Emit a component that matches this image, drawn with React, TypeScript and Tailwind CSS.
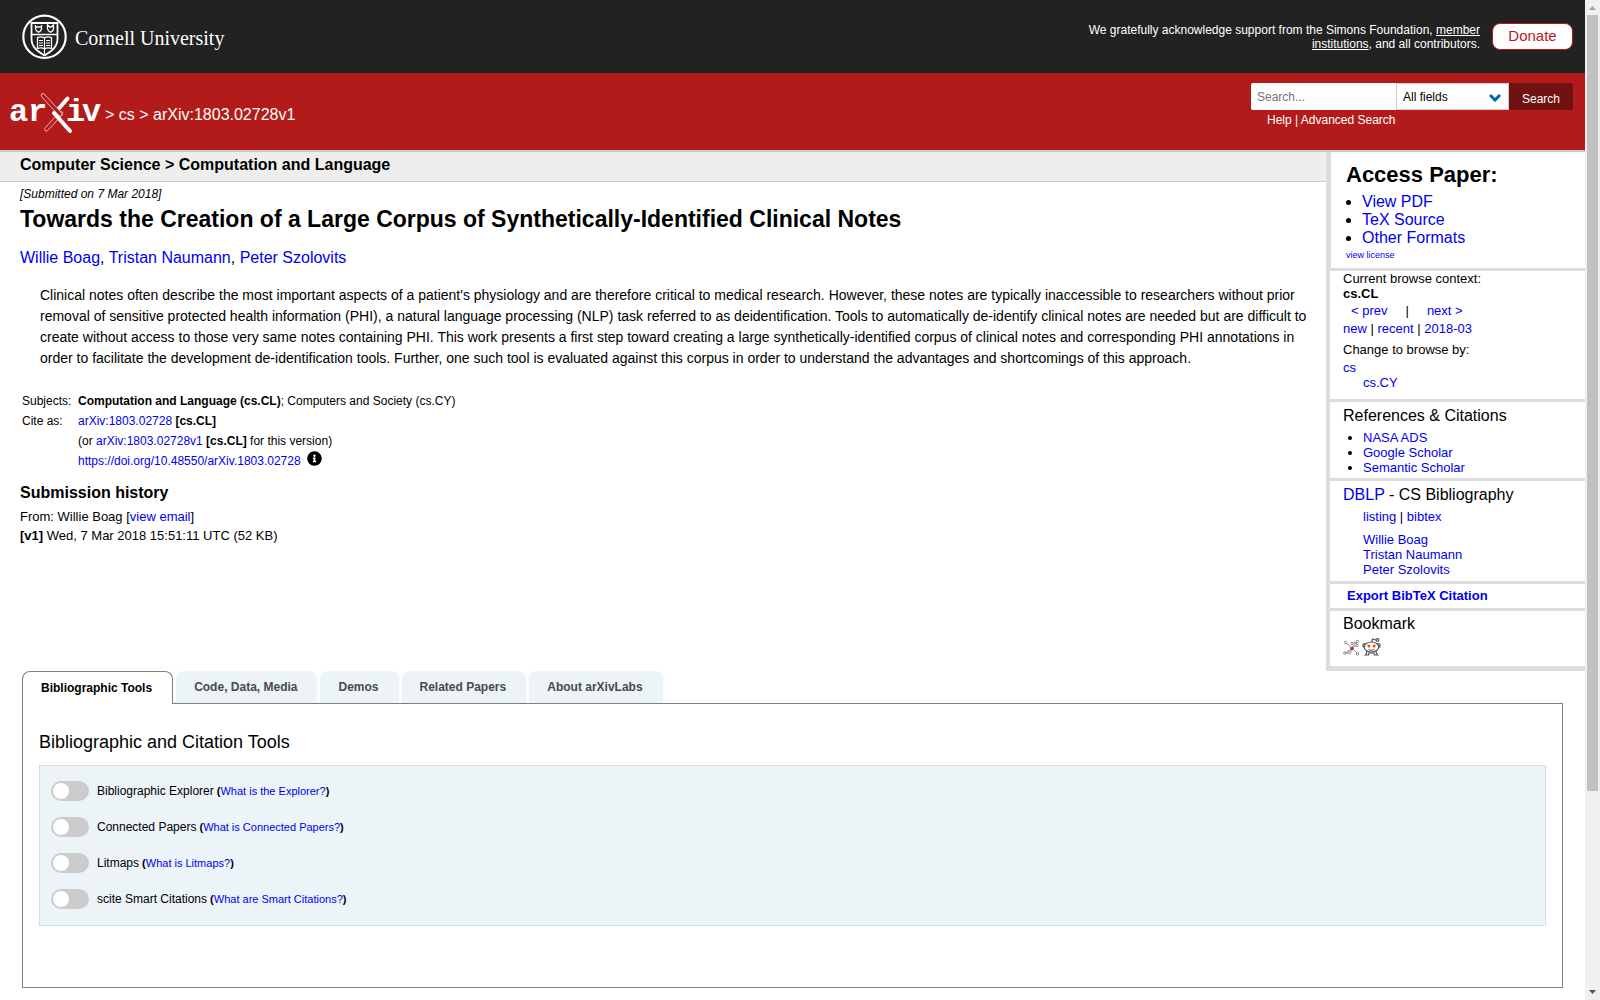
import type { ReactNode } from 'react'
import { FaInfoCircle } from 'react-icons/fa'

const tabs = ['Bibliographic Tools', 'Code, Data, Media', 'Demos', 'Related Papers', 'About arXivLabs']

const tools = [
  { id: 'bibex', name: 'Bibliographic Explorer', help: 'What is the Explorer?' },
  { id: 'connected', name: 'Connected Papers', help: 'What is Connected Papers?' },
  { id: 'litmaps', name: 'Litmaps', help: 'What is Litmaps?' },
  { id: 'scite', name: 'scite Smart Citations', help: 'What are Smart Citations?' },
]

const authors = ['Willie Boag', 'Tristan Naumann', 'Peter Szolovits']

function Link({ children, className = '' }: { children: ReactNode; className?: string }) {
  return (
    <a href="#" className={`text-[#0000ee] ${className}`}>
      {children}
    </a>
  )
}

function CornellSeal() {
  return (
    <svg viewBox="0 0 45 46" className="h-[46px] w-[45px]" fill="none" stroke="#fff" aria-hidden="true">
      <circle cx="22.5" cy="22.8" r="21.2" strokeWidth="2.2" />
      <path d="M9.5 9h26v16c0 8-6 12-13 16.5C15.5 37 9.5 33 9.5 25z" strokeWidth="1.8" />
      <path d="M9.5 20.5h26" strokeWidth="1.5" />
      <path d="M13.5 11v3.5c0 2.200 1.500 3 3 3.800 1.500-.8 3-1.600 3-3.800V11M13 13h7" strokeWidth="1.300" />
      <path d="M25.500 11v3.500c0 2.200 1.500 3 3 3.800 1.500-.8 3-1.600 3-3.800V11l-3 2.500z" strokeWidth="1.300" />
      <path d="M15.500 23.500c3-1 5-1 7 .5 2-1.500 4-1.500 7-.5v11c-3-1-5-1-7 .5-2-1.500-4-1.500-7-.5z" strokeWidth="1.300" />
      <path d="M22.500 24v16M17 26.500h4M17 29h4M17 31.500h4M24 26.500h4M24 29h4M24 31.500h4" strokeWidth="1.100" />
    </svg>
  )
}

function ArxivLogo() {
  return (
    <svg viewBox="0 0 92 44" className="h-[44px] w-[92px]" role="img" aria-label="arXiv">
      <g fill="#fff" fontFamily="'Liberation Mono', monospace" fontWeight="700" fontSize="32">
        <text x="-1" y="30">a</text>
        <text x="18" y="30">r</text>
        <text x="56" y="30">i</text>
        <text x="72" y="30">v</text>
      </g>
      <g fill="none" strokeLinecap="round">
        <path d="M36.500 38L51 22.500" stroke="#e9b3b3" strokeWidth="4.500" />
        <path d="M36.500 38L51 22.500" stroke="#b31b1b" strokeWidth="3" />
        <path d="M48 18.500L57.500 7.500" stroke="#fff" strokeWidth="4" />
        <path d="M33 4.500L50 23" stroke="#e9b3b3" strokeWidth="4.500" />
        <path d="M33 4.500L50 23" stroke="#b31b1b" strokeWidth="3" />
        <path d="M44 22L60 40" stroke="#fff" strokeWidth="4" />
      </g>
    </svg>
  )
}

function BibsonomyIcon() {
  return (
    <svg viewBox="0 0 17 17" className="h-[17px] w-[17px]" fill="none" stroke="#888" strokeWidth="1" aria-hidden="true">
      <path d="M3 4l6 5 5 5M9 9l4-6M9 9l-6 5M8 5l5-2 1 3-5 3M2 14h5l2-4" />
      <circle cx="2.500" cy="3.500" r="1.200" fill="#fff" />
      <circle cx="9" cy="4.500" r="1.200" fill="#fff" />
      <circle cx="14.500" cy="2.500" r="1.200" fill="#fff" />
      <circle cx="14" cy="6.500" r="1.200" fill="#fff" />
      <circle cx="1.800" cy="14" r="1.200" fill="#fff" />
      <circle cx="6.500" cy="13.500" r="1.200" fill="#fff" />
      <circle cx="14.500" cy="15" r="1.200" fill="#fff" />
      <circle cx="9" cy="9.500" r="1.700" fill="#a0304f" stroke="none" />
    </svg>
  )
}

function RedditIcon() {
  return (
    <svg viewBox="0 0 19 18" className="h-[18px] w-[19px]" fill="#fff" stroke="#555" strokeWidth="1.200" aria-hidden="true">
      <path d="M9.500 5l1-4 3.500 1" fill="none" />
      <circle cx="15.500" cy="2" r="1.400" />
      <path d="M5 12.500c0 2-.5 3.500-1.500 4.500h3l.5-2h5l.5 2h3c-1-1-1.500-2.500-1.500-4.500" />
      <circle cx="2.800" cy="7.500" r="1.900" />
      <circle cx="16.200" cy="7.500" r="1.900" />
      <ellipse cx="9.500" cy="9" rx="7.300" ry="5" />
      <circle cx="6.800" cy="8" r="1.500" fill="#ff4500" stroke="none" />
      <circle cx="12.200" cy="8" r="1.500" fill="#ff4500" stroke="none" />
      <path d="M6.500 11.300c2 1.300 4 1.300 6 0" fill="none" strokeWidth="1" />
    </svg>
  )
}

function Header() {
  return (
    <header>
      <div className="flex h-[73px] items-center justify-between bg-[#222] pr-3 pl-[22px] text-white">
        <a href="#" className="flex items-center gap-2 font-['Liberation_Serif',serif] text-[20px]">
          <CornellSeal />
          <span className="pt-[3px]">Cornell University</span>
        </a>
        <div className="flex items-center gap-3">
          <p className="w-[400px] text-right text-[12px] leading-[14px]">
            We gratefully acknowledge support from the Simons Foundation,{' '}
            <a href="#" className="underline">member institutions</a>, and all contributors.
          </p>
          <a href="#" className="flex h-[27px] w-[81px] items-center justify-center rounded-lg border border-[#b31b1b] bg-white text-[15px] text-[#b31b1b]">
            Donate
          </a>
        </div>
      </div>
      <div className="flex h-[79px] items-start justify-between border-b-2 border-[#ccc] bg-[#b31b1b] pr-3 pl-[10px] text-white">
        <div className="flex items-center gap-[3px] pt-[18px] text-[16px]">
          <a href="#"><ArxivLogo /></a>
          <div className="pt-1">
            &gt; <a href="#">cs</a> &gt; arXiv:1803.02728v1
          </div>
        </div>
        <form className="pt-[10px]" onSubmit={(e) => e.preventDefault()}>
          <div className="flex h-[27px] text-[12px]">
            <input
              type="text"
              placeholder="Search..."
              aria-label="Search term or terms"
              className="w-[145px] rounded-l-xs bg-white px-[6px] text-black placeholder:text-[#757575]"
            />
            <div className="relative">
              <select aria-label="Field to search" className="h-full w-[113px] appearance-none border border-[#ccc] bg-white px-[6px] text-black">
                <option>All fields</option>
              </select>
              <svg viewBox="0 0 12 8" className="pointer-events-none absolute top-[11px] right-2 h-2 w-3" fill="none" stroke="#0068ac" strokeWidth="3" aria-hidden="true">
                <path d="M1 1l5 5 5-5" />
              </svg>
            </div>
            <button type="submit" className="w-16 rounded-r-xs bg-[#701112] pt-1 text-white">Search</button>
          </div>
          <p className="pt-[3px] pl-4 text-[12px] leading-[14px]">
            <a href="#">Help</a> | <a href="#">Advanced Search</a>
          </p>
        </form>
      </div>
    </header>
  )
}

function Abstract() {
  return (
    <main className="min-w-0 flex-1">
      <h1 className="h-[30px] border-b border-[#ccc] bg-[#eee] pt-1 pl-5 text-[16px] leading-[18px] font-bold">
        Computer Science &gt; Computation and Language
      </h1>
      <div className="pt-[6px] pl-5">
        <p className="text-[12px] leading-[13px] italic">[Submitted on 7 Mar 2018]</p>
        <h2 className="pt-1 text-[23px] leading-[28px] font-bold">
          Towards the Creation of a Large Corpus of Synthetically-Identified Clinical Notes
        </h2>
        <p className="pt-[15px] text-[16px] leading-[20px]">
          {authors.map((author, i) => (
            <span key={author}>
              {i > 0 && ', '}
              <Link>{author}</Link>
            </span>
          ))}
        </p>
        <blockquote className="pt-[17px] pr-[10px] pl-5 text-[14px] leading-[21px]">
          Clinical notes often describe the most important aspects of a patient's physiology and are therefore critical to medical research. However, these notes are typically inaccessible to researchers without prior removal of sensitive protected health information (PHI), a natural language processing (NLP) task referred to as deidentification. Tools to automatically de-identify clinical notes are needed but are difficult to create without access to those very same notes containing PHI. This work presents a first step toward creating a large synthetically-identified corpus of clinical notes and corresponding PHI annotations in order to facilitate the development de-identification tools. Further, one such tool is evaluated against this corpus in order to understand the advantages and shortcomings of this approach.
        </blockquote>
        <table className="mt-[23px] ml-[2px] text-[12px] leading-[20px]">
          <tbody>
            <tr className="leading-[19px]">
              <th scope="row" className="w-14 text-left font-normal">Subjects:</th>
              <td><b>Computation and Language (cs.CL)</b>; Computers and Society (cs.CY)</td>
            </tr>
            <tr>
              <th scope="row" className="text-left font-normal">Cite as:</th>
              <td><Link>arXiv:1803.02728</Link> <b>[cs.CL]</b></td>
            </tr>
            <tr>
              <td />
              <td>(or <Link>arXiv:1803.02728v1</Link> <b>[cs.CL]</b> for this version)</td>
            </tr>
            <tr>
              <td />
              <td>
                <div className="flex gap-[6px]">
                  <Link>https://doi.org/10.48550/arXiv.1803.02728</Link>
                  <FaInfoCircle className="h-[15px] w-[15px]" />
                </div>
              </td>
            </tr>
          </tbody>
        </table>
        <h2 className="pt-3 text-[16px] leading-[20px] font-bold">Submission history</h2>
        <p className="pt-1 text-[13px] leading-[19px]">
          From: Willie Boag [<Link>view email</Link>]<br />
          <b>[v1]</b> Wed, 7 Mar 2018 15:51:11 UTC (52 KB)
        </p>
      </div>
    </main>
  )
}

function Sidebar() {
  return (
    <aside className="w-[259px] shrink-0 border-b-[5px] border-l-4 border-[#ddd] text-[13px] leading-[15px]">
      <section className="h-[119px] border-b-[3px] border-l border-[#ddd] px-[15px] pt-[9px]">
        <h2 className="text-[22px] leading-[28px] font-bold">Access Paper:</h2>
        <ul className="list-disc pt-1 pl-4 text-[16px] leading-[18px]">
          <li><Link>View PDF</Link></li>
          <li><Link>TeX Source</Link></li>
          <li><Link>Other Formats</Link></li>
        </ul>
        <p className="pt-[2px] text-[9px] leading-[12px]"><Link>view license</Link></p>
      </section>
      <section className="h-[131px] border-b-[3px] border-[#ddd] px-[13px]">
        <p>Current browse context:</p>
        <p className="font-bold">cs.CL</p>
        <p className="flex gap-[18px] pt-[2px] pl-2">
          <Link>&lt; prev</Link> | <Link>next &gt;</Link>
        </p>
        <p className="pt-[3px]">
          <Link>new</Link> | <Link>recent</Link> | <Link>2018-03</Link>
        </p>
        <p className="pt-[6px]">Change to browse by:</p>
        <p className="pt-[3px]"><Link>cs</Link></p>
        <p className="pl-5"><Link>cs.CY</Link></p>
      </section>
      <section className="h-[79px] border-b-[3px] border-[#ddd] px-[13px] pt-1">
        <h3 className="text-[16px] leading-[20px]">References &amp; Citations</h3>
        <ul className="list-disc pt-1 pl-5">
          <li><Link>NASA ADS</Link></li>
          <li><Link>Google Scholar</Link></li>
          <li><Link>Semantic Scholar</Link></li>
        </ul>
      </section>
      <section className="h-[103px] border-b-[3px] border-[#ddd] px-[13px] pt-1">
        <h3 className="text-[16px] leading-[20px]"><Link>DBLP</Link> - CS Bibliography</h3>
        <p className="pt-1 pl-5"><Link>listing</Link> | <Link>bibtex</Link></p>
        <ul className="pt-2 pl-5">
          {authors.map((author) => (
            <li key={author}><Link>{author}</Link></li>
          ))}
        </ul>
      </section>
      <section className="h-[27px] border-b-[3px] border-[#ddd] pt-1 pl-[17px]">
        <Link className="font-bold">Export BibTeX Citation</Link>
      </section>
      <section className="h-[55px] px-[13px] pt-[3px]">
        <h3 className="text-[16px] leading-[20px]">Bookmark</h3>
        <div className="flex items-center gap-[2px] pt-1">
          <a href="#" aria-label="BibSonomy"><BibsonomyIcon /></a>
          <a href="#" aria-label="Reddit"><RedditIcon /></a>
        </div>
      </section>
    </aside>
  )
}

function Labs() {
  return (
    <section className="px-[22px] pb-3">
      <div className="flex gap-[3px]" role="tablist">
        {tabs.map((tab, i) => (
          <button
            key={tab}
            type="button"
            role="tab"
            aria-selected={i === 0}
            className={
              i === 0
                ? 'z-10 -mb-px h-[33px] rounded-t-lg border border-b-0 border-[#808080] bg-white pr-5 pl-[18px] text-[12px] font-bold'
                : 'h-8 rounded-t-lg bg-[#ecf4f8] pr-5 pl-[18px] text-[12px] font-bold text-[#4a4a4a]'
            }
          >
            {tab}
          </button>
        ))}
      </div>
      <div className="h-[285px] border border-[#808080] px-4 pt-[26px]">
        <h2 className="text-[18px] leading-[24px]">Bibliographic and Citation Tools</h2>
        <div className="mt-[11px] flex flex-col gap-4 border border-dotted border-[#b5ccd6] bg-[#ecf4f8] px-[11px] pt-[15px] pb-4 text-[11px] leading-[20px]">
          {tools.map((tool) => (
            <div key={tool.id} className="flex gap-2">
              <input
                id={tool.id}
                type="checkbox"
                role="switch"
                className="h-5 w-[38px] appearance-none rounded-full bg-[#ccc] p-[2px] before:block before:h-4 before:w-4 before:rounded-full before:bg-white checked:before:ml-auto"
              />
              <div>
                <label htmlFor={tool.id} className="text-[12px] leading-[20px]">{tool.name}</label> <b>(</b>
                <Link>{tool.help}</Link>
                <b>)</b>
              </div>
            </div>
          ))}
        </div>
      </div>
    </section>
  )
}

function ScrollRail() {
  return (
    <div className="sticky top-0 flex h-screen w-[15px] shrink-0 flex-col items-center bg-[#f0f0f0]" aria-hidden="true">
      <svg viewBox="0 0 15 15" className="h-[15px] w-[15px]" fill="#a3a3a3"><path d="M4 10l3.500-4 3.500 4z" /></svg>
      <div className="w-[11px] grow-4 bg-[#c1c1c1]" />
      <div className="grow" />
      <svg viewBox="0 0 15 15" className="h-[15px] w-[15px]" fill="#505050"><path d="M4 5l3.500 4 3.500-4z" /></svg>
    </div>
  )
}

export default function App() {
  return (
    <div className="flex min-h-screen bg-white font-['Liberation_Sans',Arial,sans-serif] text-black">
      <div className="min-w-0 flex-1">
        <Header />
        <div className="flex">
          <Abstract />
          <Sidebar />
        </div>
        <Labs />
      </div>
      <ScrollRail />
    </div>
  )
}
